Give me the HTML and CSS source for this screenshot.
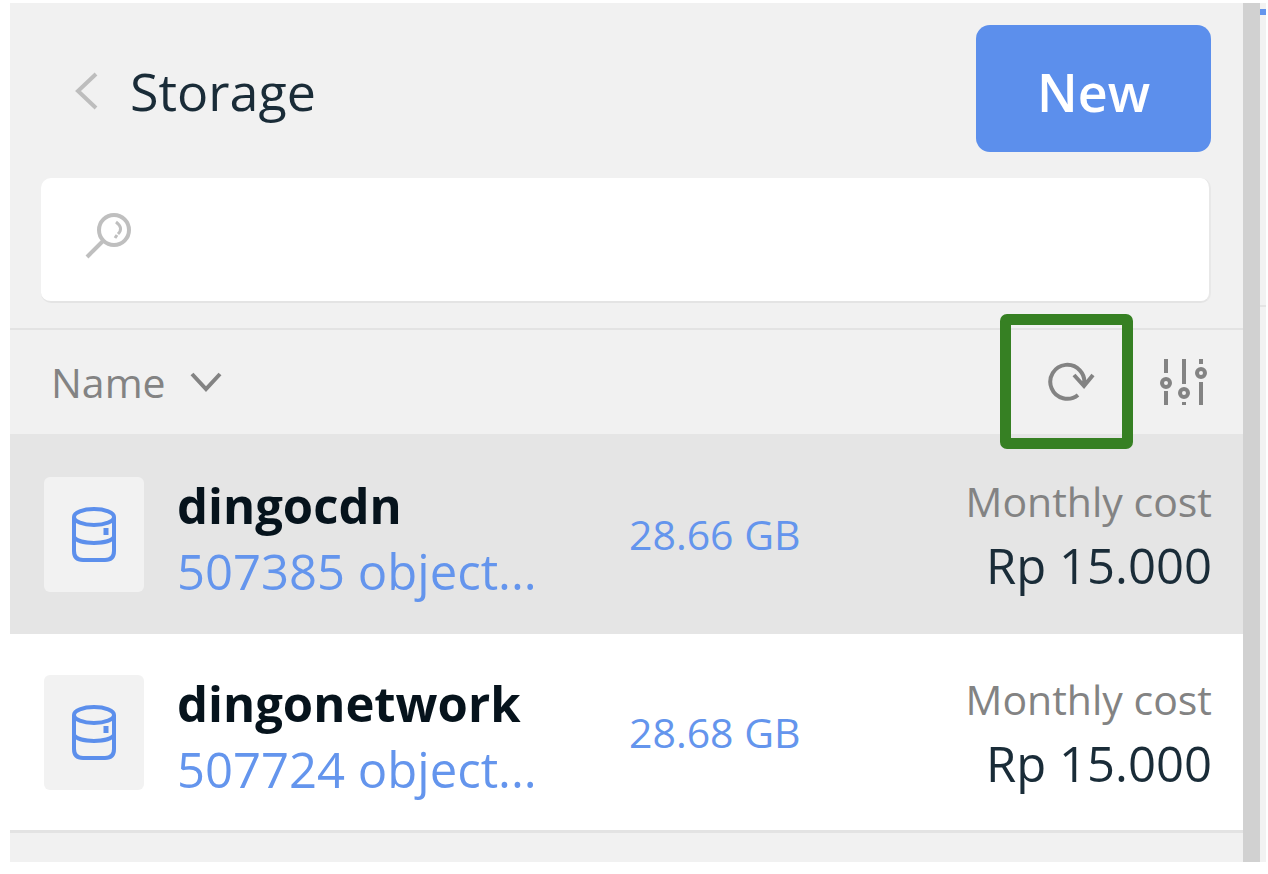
FILE: index.html
```html
<!DOCTYPE html>
<html lang="en">
<head>
<meta charset="utf-8">
<meta name="viewport" content="width=device-width, initial-scale=1.0">
<title>Storage</title>
<link rel="stylesheet" href="styles.css">
</head>
<body>
<div class="app">
  <main class="panel">
    <header class="panel-header">
      <a class="back" href="#" aria-label="Back">
        <svg width="24" height="40" viewBox="0 0 24 40"><path d="M22 3L4 20l18 17"/></svg>
      </a>
      <h1 class="title">Storage</h1>
      <button class="btn-new" type="button">New</button>
    </header>

    <div class="search">
      <svg class="search-icon" width="48" height="48" viewBox="0 0 48 48">
        <circle cx="29" cy="18" r="15"/>
        <path d="M19 28L2 45"/>
        <path class="glint" d="M31 10q8 6 2 12M32 23l-2 3"/>
      </svg>
      <input class="search-input" type="text" aria-label="Search">
    </div>

    <div class="toolbar">
      <button class="sort" type="button">
        Name
        <svg width="32" height="20" viewBox="0 0 32 20"><path d="M2 2l14 15L30 2"/></svg>
      </button>
      <div class="tools">
        <button class="tool refresh" type="button" aria-label="Refresh">
          <svg width="48" height="42" viewBox="0 0 48 42">
            <path d="M31 34A17 17 0 1 1 37 24M27 14l10 11 9-11"/>
          </svg>
          <span class="highlight"></span>
        </button>
        <button class="tool" type="button" aria-label="Filters">
          <svg width="48" height="48" viewBox="0 0 48 48">
            <path d="M7 1v14M7 33v14M25 1v25M25 44v3M42 1v5M42 24v23"/>
            <circle cx="7" cy="25" r="4"/>
            <circle cx="25" cy="35" r="4"/>
            <circle cx="42" cy="15" r="4"/>
          </svg>
        </button>
      </div>
    </div>

    <ul class="list">
      <li class="item active">
        <div class="item-icon">
          <svg width="44" height="56" viewBox="0 0 44 56">
            <ellipse cx="22" cy="11" rx="20" ry="8"/>
            <path d="M2 11v34q0 9 9 9h22q9 0 9-9V11M2 31c5 8 35 8 40 0"/>
            <path class="dot" d="M34 22v7"/>
          </svg>
        </div>
        <div class="item-info">
          <strong class="item-name">dingocdn</strong>
          <span class="item-objects">507385 object...</span>
        </div>
        <div class="item-size">28.66 GB</div>
        <div class="item-cost">
          <span class="cost-label">Monthly cost</span>
          <span class="cost-value">Rp 15.000</span>
        </div>
      </li>
      <li class="item">
        <div class="item-icon">
          <svg width="44" height="56" viewBox="0 0 44 56">
            <ellipse cx="22" cy="11" rx="20" ry="8"/>
            <path d="M2 11v34q0 9 9 9h22q9 0 9-9V11M2 31c5 8 35 8 40 0"/>
            <path class="dot" d="M34 22v7"/>
          </svg>
        </div>
        <div class="item-info">
          <strong class="item-name">dingonetwork</strong>
          <span class="item-objects">507724 object...</span>
        </div>
        <div class="item-size">28.68 GB</div>
        <div class="item-cost">
          <span class="cost-label">Monthly cost</span>
          <span class="cost-value">Rp 15.000</span>
        </div>
      </li>
    </ul>
  </main>
  <div class="divider"></div>
  <aside class="detail">
    <div class="detail-head"></div>
  </aside>
</div>
</body>
</html>
```

FILE: styles.css
```css
* {
  box-sizing: border-box;
}
body {
  margin: 0;
  background: #fff;
  color: #1a2c38;
  font-family: "Open Sans", "Noto Sans", sans-serif;
}
button, input {
  font-family: inherit;
  border: 0;
  padding: 0;
}
svg {
  display: block;
  fill: none;
  stroke: currentColor;
  stroke-width: 4;
}

.app {
  display: flex;
  min-height: 100vh;
  padding: 3px 2px 12px 10px;
}
.panel {
  flex: 1;
  min-width: 0;
  background: #f1f1f1;
}
.divider {
  width: 17px;
  background: #d1d1d1;
}
.detail {
  width: 6px;
  padding-top: 6px;
  background: #f2f2f2;
}
.detail-head {
  height: 298px;
  border-top: 6px solid #6495ed;
  border-bottom: 2px solid #e4e4e4;
}

.panel-header {
  display: flex;
  align-items: center;
  height: 175px;
  padding: 0 32px 0 64px;
}
.back {
  color: #bdbdbd;
}
.title {
  flex: 1;
  margin: 0 0 0 32px;
  font-size: 52px;
  font-weight: 400;
}
.btn-new {
  align-self: flex-start;
  width: 235px;
  height: 127px;
  margin-top: 22px;
  padding-top: 6px;
  border-radius: 14px;
  background: #5c8fec;
  color: #fff;
  font-size: 52px;
  font-weight: 600;
}

.search {
  display: flex;
  align-items: center;
  height: 125px;
  margin: 0 32px 25px 31px;
  padding: 0 44px 8px;
  background: #fff;
  border-radius: 10px;
  border-right: 2px solid #e8e8e8;
  border-bottom: 2px solid #e4e4e4;
}
.search-icon {
  color: #bfbfbf;
}
.glint {
  stroke-width: 3;
}
.search-input {
  flex: 1;
  height: 100px;
  margin-left: 20px;
  background: none;
  outline: none;
  font-size: 41px;
}

.toolbar {
  display: flex;
  align-items: center;
  justify-content: space-between;
  height: 106px;
  padding: 0 36px 0 41px;
  border-top: 2px solid #e3e3e3;
  color: #838383;
}
.sort {
  display: flex;
  align-items: center;
  gap: 24px;
  background: none;
  color: inherit;
  font-size: 41px;
}
.tools {
  display: flex;
  align-items: center;
  gap: 64px;
}
.tool {
  position: relative;
  background: none;
  color: inherit;
}
/* frame around the refresh button */
.highlight {
  position: absolute;
  top: -47px;
  left: -47px;
  width: 133px;
  height: 135px;
  border: 11px solid #368023;
  border-radius: 7px;
}

.list {
  margin: 0;
  padding: 0;
  list-style: none;
  border-bottom: 3px solid #e3e3e3;
}
.item {
  display: flex;
  align-items: center;
  height: 196px;
  padding: 0 31px 0 34px;
  background: #fff;
}
.item.active {
  height: 200px;
  background: #e5e5e5;
}
.item-icon {
  display: flex;
  align-items: center;
  justify-content: center;
  width: 100px;
  height: 115px;
  border-radius: 6px;
  background: #f2f2f2;
  color: #5c8fec;
}
.dot {
  stroke-width: 5;
}
.item-info {
  width: 452px;
  margin-left: 33px;
  padding-top: 8px;
}
.item-name, .item-objects, .cost-label, .cost-value {
  display: block;
  font-size: 49px;
  line-height: 66px;
  white-space: nowrap;
}
.item-name {
  color: #06131c;
}
.item-objects, .item-size {
  color: #6495ed;
}
.item-size {
  font-size: 41px;
  white-space: nowrap;
}
.item-cost {
  flex: 1;
  text-align: right;
}
.cost-label {
  color: #838383;
  font-size: 41px;
  line-height: 62px;
}
```
